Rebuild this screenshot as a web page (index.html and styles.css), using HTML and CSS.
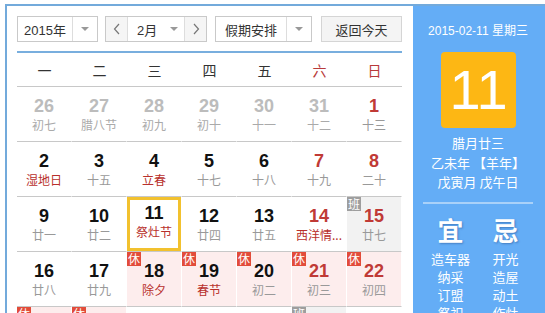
FILE: index.html
```html
<!DOCTYPE html>
<html lang="zh-CN">
<head>
<meta charset="utf-8">
<title>万年历</title>
<link rel="stylesheet" href="styles.css">
</head>
<body>
<div class="frame">
  <div class="cal">
    <div class="toolbar">
      <div class="select year"><span class="lbl">2015年</span><span class="arr"><i class="tri"></i></span></div>
      <div class="month-group">
        <span class="nav"><svg width="8" height="12" viewBox="0 0 8 12"><polyline points="6,1 1.5,6 6,11" fill="none" stroke="#777" stroke-width="1.2"/></svg></span>
        <span class="month"><span class="mlbl">2月</span><i class="tri"></i></span>
        <span class="nav"><svg width="8" height="12" viewBox="0 0 8 12"><polyline points="2,1 6.5,6 2,11" fill="none" stroke="#777" stroke-width="1.2"/></svg></span>
      </div>
      <div class="select holiday"><span class="lbl">假期安排</span><span class="arr"><i class="tri"></i></span></div>
      <span class="today-btn">返回今天</span>
    </div>
    <div class="weekdays">
      <span>一</span><span>二</span><span>三</span><span>四</span><span>五</span><span class="we">六</span><span class="we">日</span>
    </div>
    <div class="grid">
      <div class="cell other"><div class="num">26</div><div class="lunar">初七</div></div>
      <div class="cell other"><div class="num">27</div><div class="lunar">腊八节</div></div>
      <div class="cell other"><div class="num">28</div><div class="lunar">初九</div></div>
      <div class="cell other"><div class="num">29</div><div class="lunar">初十</div></div>
      <div class="cell other"><div class="num">30</div><div class="lunar">十一</div></div>
      <div class="cell other"><div class="num">31</div><div class="lunar">十二</div></div>
      <div class="cell wkend"><div class="num">1</div><div class="lunar">十三</div></div>

      <div class="cell"><div class="num">2</div><div class="lunar fest">湿地日</div></div>
      <div class="cell"><div class="num">3</div><div class="lunar">十五</div></div>
      <div class="cell"><div class="num">4</div><div class="lunar fest">立春</div></div>
      <div class="cell"><div class="num">5</div><div class="lunar">十七</div></div>
      <div class="cell"><div class="num">6</div><div class="lunar">十八</div></div>
      <div class="cell wkend"><div class="num">7</div><div class="lunar">十九</div></div>
      <div class="cell wkend"><div class="num">8</div><div class="lunar">二十</div></div>

      <div class="cell"><div class="num">9</div><div class="lunar">廿一</div></div>
      <div class="cell"><div class="num">10</div><div class="lunar">廿二</div></div>
      <div class="cell today"><div class="num">11</div><div class="lunar fest">祭灶节</div></div>
      <div class="cell"><div class="num">12</div><div class="lunar">廿四</div></div>
      <div class="cell"><div class="num">13</div><div class="lunar">廿五</div></div>
      <div class="cell wkend"><div class="num">14</div><div class="lunar fest">西洋情...</div></div>
      <div class="cell wkend work"><span class="badge">班</span><div class="num">15</div><div class="lunar">廿七</div></div>

      <div class="cell"><div class="num">16</div><div class="lunar">廿八</div></div>
      <div class="cell"><div class="num">17</div><div class="lunar">廿九</div></div>
      <div class="cell rest"><span class="badge">休</span><div class="num">18</div><div class="lunar fest">除夕</div></div>
      <div class="cell rest"><span class="badge">休</span><div class="num">19</div><div class="lunar fest">春节</div></div>
      <div class="cell rest"><span class="badge">休</span><div class="num">20</div><div class="lunar">初二</div></div>
      <div class="cell rest wkend"><span class="badge">休</span><div class="num">21</div><div class="lunar">初三</div></div>
      <div class="cell rest wkend"><span class="badge">休</span><div class="num">22</div><div class="lunar">初四</div></div>

      <div class="cell rest"><span class="badge">休</span><div class="num">23</div><div class="lunar">初五</div></div>
      <div class="cell rest"><span class="badge">休</span><div class="num">24</div><div class="lunar">初六</div></div>
      <div class="cell"><div class="num">25</div><div class="lunar">初七</div></div>
      <div class="cell"><div class="num">26</div><div class="lunar">初八</div></div>
      <div class="cell"><div class="num">27</div><div class="lunar">初九</div></div>
      <div class="cell wkend work"><span class="badge">班</span><div class="num">28</div><div class="lunar">初十</div></div>
      <div class="cell wkend other"><div class="num">1</div><div class="lunar">十一</div></div>
    </div>
  </div>
  <div class="side">
    <div class="sdate">2015-02-11 星期三</div>
    <div class="bigday">11</div>
    <div class="lunarinfo">
      <div>腊月廿三</div>
      <div>乙未年 【羊年】</div>
      <div>戊寅月 戊午日</div>
    </div>
    <div class="divider"></div>
    <div class="yiji">
      <div class="col">
        <div class="head">宜</div>
        <div>造车器</div><div>纳采</div><div>订盟</div><div>祭祀</div><div>祈福</div>
      </div>
      <div class="col">
        <div class="head">忌</div>
        <div>开光</div><div>造屋</div><div>动土</div><div>作灶</div><div>栽种</div>
      </div>
    </div>
  </div>
</div>
</body>
</html>
```

FILE: styles.css
```css
html, body {
  margin: 0;
  padding: 0;
  overflow: hidden;
  background: #fff;
}
body {
  font-family: "Liberation Sans", "Noto Sans CJK SC", Arial, sans-serif;
  color: #333;
  width: 545px;
  height: 313px;
}
.frame {
  margin: 4px 0 0 5px;
  border: 2px solid #73aadb;
  border-right: 0;
  border-bottom: 0;
  display: flex;
  width: 560px;
  height: 360px;
}
.cal {
  width: 385px;
  padding: 0 11px 0 10px;
  flex: none;
}
.toolbar {
  display: flex;
  align-items: center;
  margin-top: 10px;
  padding-bottom: 9px;
  border-bottom: 2px solid #78aede;
  height: 26px;
  font-size: 13px;
  color: #333;
}
.select {
  display: flex;
  height: 24px;
  border: 1px solid #c9c9c9;
  background: #fff;
  box-sizing: content-box;
}
.select .lbl {
  display: flex;
  align-items: center;
  justify-content: center;
  border-right: 1px solid #ddd;
}
.select .arr {
  width: 24px;
  display: flex;
  align-items: center;
  justify-content: center;
}
.tri {
  display: block;
  width: 0;
  height: 0;
  border-left: 4px solid transparent;
  border-right: 4px solid transparent;
  border-top: 4px solid #999;
}
.year .lbl { width: 54px; }
.holiday { margin-left: 8px; }
.holiday .lbl { width: 70px; }
.month-group {
  display: flex;
  height: 24px;
  margin-left: 7px;
  border: 1px solid #c9c9c9;
}
.nav {
  width: 21px;
  display: flex;
  align-items: center;
  justify-content: center;
  background: #f5f5f5;
}
.month {
  width: 58px;
  display: flex;
  align-items: center;
  padding-left: 9px;
  box-sizing: border-box;
  border-left: 1px solid #ddd;
  border-right: 1px solid #ddd;
  background: #fff;
}
.month .mlbl { width: 33px; }
.today-btn {
  margin-left: 9px;
  width: 80px;
  height: 24px;
  border: 1px solid #d5d5d5;
  background: #f4f4f4;
  display: flex;
  align-items: center;
  justify-content: center;
}
.weekdays {
  display: grid;
  grid-template-columns: repeat(7, 55px);
  height: 33px;
  border-bottom: 1px solid #c8c8c8;
  font-size: 14px;
  font-family: "Noto Sans CJK SC", sans-serif;
  align-items: center;
  text-align: center;
  color: #333;
}
.weekdays .we { color: #b83a3a; }
.grid {
  display: grid;
  grid-template-columns: repeat(7, 55px);
}
.cell {
  position: relative;
  height: 54px;
  border-bottom: 1px solid #c8c8c8;
  border-right: 1px solid #fff;
  text-align: center;
  padding-top: 9px;
  box-sizing: border-box;
  height: 55px;
}
.cell .num {
  font-weight: bold;
  font-size: 18px;
  line-height: 20px;
  color: #111;
}
.cell .lunar {
  font-size: 12px;
  line-height: 18px;
  font-family: "Noto Sans CJK SC", sans-serif;
  color: #999;
}
.cell.wkend .num { color: #c03a36; }
.cell .lunar.fest { color: #b8302c; }
.cell.other .num { color: #bcbcbc; }
.cell.other .lunar { color: #aaa; }
.cell.rest { background: #fdeded; }
.cell.work { background: #f2f2f2; }
.badge {
  position: absolute;
  left: 0;
  top: 0;
  width: 14px;
  height: 14px;
  font-size: 12px;
  line-height: 14px;
  color: #fff;
  font-family: "Noto Sans CJK SC", sans-serif;
  background: #e24c3a;
}
.work .badge { background: #9e9e9e; }
.cell.today {
  padding-top: 6px;
}
.cell.today::after {
  content: "";
  position: absolute;
  left: 0;
  top: 0;
  right: 0;
  bottom: 0;
  border: 3px solid #f2c12e;
}
.side {
  flex: none;
  width: 147px;
  background: #64adf6;
  color: #fff;
  padding: 16px 0 0 10px;
  box-sizing: border-box;
}
.sdate {
  width: 110px;
  text-align: center;
  font-size: 12px;
  line-height: 18px;
  white-space: nowrap;
}
.bigday {
  margin: 12px 0 0 18px;
  width: 75px;
  height: 76px;
  background: #fdb714;
  border-radius: 4px;
  font-size: 56px;
  line-height: 76px;
  text-align: center;
  color: #fff;
}
.lunarinfo {
  width: 110px;
  margin-top: 5px;
  text-align: center;
  font-size: 13px;
  line-height: 19.5px;
  font-family: "Noto Sans CJK SC", sans-serif;
  white-space: nowrap;
}
.divider {
  width: 110px;
  height: 2px;
  background: #a9d1f9;
  margin-top: 10px;
}
.yiji {
  display: flex;
  width: 110px;
  margin-top: 11px;
  font-family: "Noto Sans CJK SC", sans-serif;
  font-size: 13px;
  line-height: 18px;
}
.yiji .col {
  width: 55px;
  text-align: center;
}
.yiji .head {
  font-size: 26px;
  line-height: 30px;
  font-weight: bold;
  margin-bottom: 5px;
  text-shadow: 1px 1px 2px rgba(30, 70, 130, 0.45);
}
```
